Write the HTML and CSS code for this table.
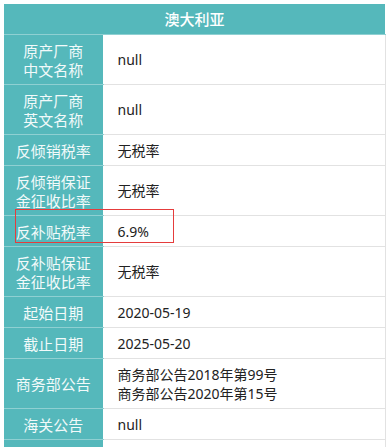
FILE: index.html
```html
<!DOCTYPE html>
<html lang="zh-CN">
<head>
<meta charset="utf-8">
<link rel="stylesheet" href="styles.css">
</head>
<body>
<div class="wrap">
  <table class="info">
    <colgroup>
      <col class="col-label">
      <col class="col-value">
    </colgroup>
    <thead>
      <tr><th colspan="2" class="title">澳大利亚</th></tr>
    </thead>
    <tbody>
      <tr><th>原产厂商<br>中文名称</th><td>null</td></tr>
      <tr><th>原产厂商<br>英文名称</th><td>null</td></tr>
      <tr><th>反倾销税率</th><td>无税率</td></tr>
      <tr><th>反倾销保证<br>金征收比率</th><td>无税率</td></tr>
      <tr><th><span class="mark"></span>反补贴税率</th><td>6.9%</td></tr>
      <tr><th>反补贴保证<br>金征收比率</th><td>无税率</td></tr>
      <tr><th>起始日期</th><td>2020-05-19</td></tr>
      <tr><th>截止日期</th><td>2025-05-20</td></tr>
      <tr><th>商务部公告</th><td>商务部公告2018年第99号<br>商务部公告2020年第15号</td></tr>
      <tr><th>海关公告</th><td>null</td></tr>
      <tr><th>&nbsp;</th><td>&nbsp;</td></tr>
    </tbody>
  </table>
</div>
</body>
</html>
```

FILE: styles.css
```css
html, body {
  margin: 0;
  padding: 0;
  background: #ffffff;
}
.wrap {
  padding: 4px 5px 0 4px;
}
.info {
  width: 381px;
  border-collapse: collapse;
  table-layout: fixed;
  font-family: "Noto Sans", "Noto Sans CJK SC", sans-serif;
}
.col-label {
  width: 99px;
}
.col-value {
  width: 282px;
}
.info th.title {
  background: #55b8bb;
  color: #ffffff;
  font-size: 15px;
  font-weight: 500;
  font-family: "Noto Sans CJK SC", sans-serif;
  height: 30px;
  padding: 0;
  line-height: 30px;
  text-align: center;
  border-bottom: 1px solid #8fd0d2;
}
.info tbody th {
  position: relative;
  background: #55b8bb;
  color: #f2fafa;
  font-family: "Noto Sans CJK SC", sans-serif;
  font-size: 15px;
  font-weight: 400;
  line-height: 19px;
  padding: 5.5px 0;
  text-align: center;
  border-bottom: 1px solid #8fd0d2;
}
.info td {
  background: #ffffff;
  color: #222222;
  font-size: 14px;
  line-height: 19px;
  padding: 5.5px 0 5.5px 14px;
  border-bottom: 1px solid #e2e2e2;
  border-left: 1px solid #ffffff;
  border-right: 1px solid #e2e2e2;
}
.mark {
  position: absolute;
  z-index: 2;
  left: 11px;
  top: -7px;
  width: 157px;
  height: 32px;
  border: 1px solid #e53c3c;
  pointer-events: none;
}
```
